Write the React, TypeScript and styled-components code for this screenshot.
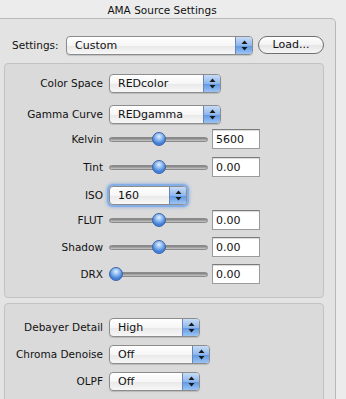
import React from "react";
import styled, { createGlobalStyle, css } from "styled-components";

const GlobalStyle = createGlobalStyle`
  html, body {
    margin: 0;
    padding: 0;
    background: #ececec;
    overflow: hidden;
  }
  body {
    font-family: "DejaVu Sans", "Liberation Sans", sans-serif;
    font-size: 10.5px;
    color: #111;
  }
`;

const Window = styled.div`
  width: 346px;
  height: 399px;
  background: #ececec;
  overflow: hidden;
`;

const Title = styled.div`
  width: 324px;
  height: 18px;
  line-height: 21px;
  text-align: center;
  font-size: 10.5px;
`;

const Outer = styled.div`
  width: 337px;
  margin-left: -1px;
  border: 1px solid #b9b9b9;
  border-left: none;
  border-radius: 0 5px 0 0;
  background: #e3e3e3;
  padding: 16px 11px 0 5px;
  box-sizing: border-box;
  height: 390px;
`;

const TopRow = styled.div`
  display: flex;
  align-items: center;
  height: 20px;
  padding-left: 8px;
  margin-bottom: 8px;
`;

const TopLabel = styled.span`
  width: 54px;
`;

const Group = styled.div<{ $pt: number; $pb: number }>`
  background: #dadada;
  border: 1px solid #c2c2c2;
  border-radius: 4px;
  padding: ${(p) => `${p.$pt}px 0 ${p.$pb}px 0`};
  display: flex;
  flex-direction: column;
  gap: 5px;
  margin-bottom: 5px;
`;

const Row = styled.div<{ $mt?: number }>`
  display: flex;
  align-items: center;
  height: 22px;
  margin-top: ${(p) => p.$mt ?? 0}px;
`;

const Label = styled.span`
  width: 104px;
  text-align: right;
  padding-right: 6px;
  white-space: nowrap;
  box-sizing: border-box;
  flex: none;
`;

const PopupBox = styled.div<{ $w: number; $focus?: boolean }>`
  position: relative;
  width: ${(p) => p.$w}px;
  height: 19px;
  border: 1px solid #8c8c8c;
  border-radius: 4px;
  background: linear-gradient(#ffffff 0%, #f6f6f6 50%, #e8e8e8 51%, #f7f7f7 100%);
  box-sizing: border-box;
  display: flex;
  align-items: center;
  overflow: hidden;
  box-shadow: 0 1px 1px rgba(0, 0, 0, 0.15);
  ${(p) =>
    p.$focus &&
    css`
      box-shadow: 0 0 0 2px #84aee6, 0 0 3px 3px rgba(110, 160, 230, 0.5);
    `}
`;

const PopupText = styled.span`
  flex: 1;
  padding-left: 8px;
  font-size: 11px;
`;

const ArrowCap = styled.div`
  width: 16px;
  height: 100%;
  border-left: 1px solid #6a86b8;
  background: linear-gradient(#c8dcf6 0%, #8fb7ec 50%, #5d97e3 51%, #9cc4f3 100%);
  display: flex;
  align-items: center;
  justify-content: center;
`;

const Slider = styled.div`
  position: relative;
  width: 99px;
  height: 14px;
  margin-right: 4px;
  display: flex;
  align-items: center;
`;

const Track = styled.div`
  width: 100%;
  height: 5px;
  border-radius: 3px;
  background: linear-gradient(#7d7d7d, #a9a9a9 60%, #c8c8c8);
  border: 1px solid #8a8a8a;
  box-sizing: border-box;
`;

const Thumb = styled.div`
  position: absolute;
  top: 0;
  width: 14px;
  height: 14px;
  margin-left: -7px;
  border-radius: 50%;
  border: 1px solid #3d63a6;
  box-sizing: border-box;
  background: radial-gradient(circle at 50% 30%, #e5f0ff 0%, #8ab8f0 35%, #3b7ad6 70%, #5e9ceb 100%);
`;

const Field = styled.div`
  width: 48px;
  height: 20px;
  background: #fff;
  border: 1px solid #9b9b9b;
  border-top-color: #7a7a7a;
  box-sizing: border-box;
  padding-left: 3px;
  line-height: 19px;
  font-size: 11px;
  box-shadow: inset 0 1px 1px rgba(0, 0, 0, 0.15);
`;

const LoadButton = styled.div`
  width: 66px;
  height: 18px;
  margin-left: 5px;
  border: 1px solid #6f6f6f;
  border-radius: 9px;
  background: linear-gradient(#ffffff 0%, #f3f3f3 50%, #e6e6e6 51%, #f6f6f6 100%);
  box-sizing: border-box;
  text-align: center;
  line-height: 16px;
  font-size: 11px;
`;

const Arrows = () => (
  <svg width="7" height="11" viewBox="0 0 7 11">
    <path d="M3.5 0.5 L6.5 4 L0.5 4 Z" fill="#1a1a1a" />
    <path d="M3.5 10.5 L6.5 7 L0.5 7 Z" fill="#1a1a1a" />
  </svg>
);

const Popup = ({ value, width, focus }: { value: string; width: number; focus?: boolean }) => (
  <PopupBox $w={width} $focus={focus}>
    <PopupText>{value}</PopupText>
    <ArrowCap>
      <Arrows />
    </ArrowCap>
  </PopupBox>
);

const SliderRow = ({ label, pos, value, mt }: { label: string; pos: number; value: string; mt?: number }) => (
  <Row $mt={mt}>
    <Label>{label}</Label>
    <Slider>
      <Track />
      <Thumb style={{ left: `${pos}%` }} />
    </Slider>
    <Field>{value}</Field>
  </Row>
);

export default function App() {
  return (
    <Window>
      <GlobalStyle />
      <Title>AMA Source Settings</Title>
      <Outer>
        <TopRow>
          <TopLabel>Settings:</TopLabel>
          <Popup value="Custom" width={187} />
          <LoadButton>Load...</LoadButton>
        </TopRow>
        <Group $pt={8} $pb={12}>
          <Row>
            <Label>Color Space</Label>
            <Popup value="REDcolor" width={112} />
          </Row>
          <Row $mt={4}>
            <Label>Gamma Curve</Label>
            <Popup value="REDgamma" width={112} />
          </Row>
          <SliderRow label="Kelvin" pos={50} value="5600" mt={-2} />
          <SliderRow label="Tint" pos={50} value="0.00" mt={1} />
          <Row $mt={1}>
            <Label>ISO</Label>
            <Popup value="160" width={78} focus />
          </Row>
          <SliderRow label="FLUT" pos={50} value="0.00" mt={-2} />
          <SliderRow label="Shadow" pos={50} value="0.00" />
          <SliderRow label="DRX" pos={7} value="0.00" />
        </Group>
        <Group $pt={12} $pb={20}>
          <Row>
            <Label>Debayer Detail</Label>
            <Popup value="High" width={91} />
          </Row>
          <Row>
            <Label>Chroma Denoise</Label>
            <Popup value="Off" width={101} />
          </Row>
          <Row>
            <Label>OLPF</Label>
            <Popup value="Off" width={91} />
          </Row>
        </Group>
      </Outer>
    </Window>
  );
}
